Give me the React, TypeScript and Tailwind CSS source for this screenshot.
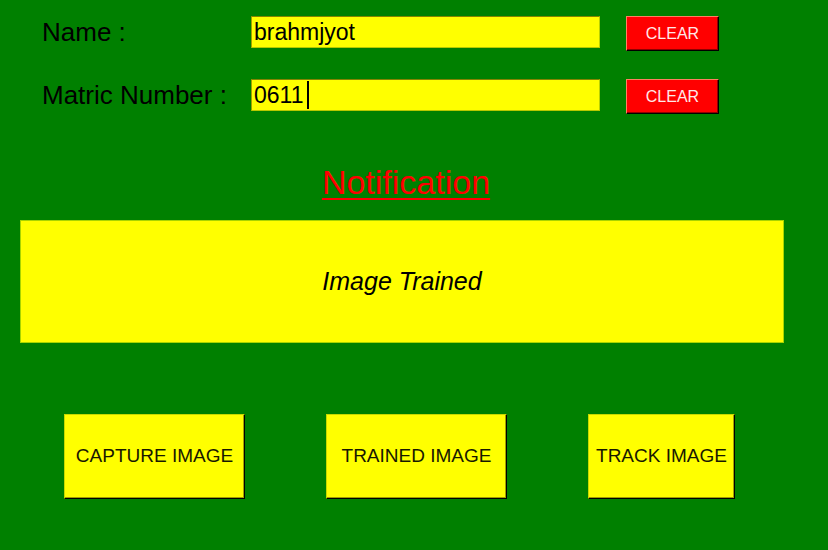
import { useState } from "react";

interface FieldProps {
  id: string;
  label: string;
  value: string;
  onChange: (value: string) => void;
  caret?: boolean;
}

function Field({ id, label, value, onChange, caret }: FieldProps) {
  return (
    <div className="flex items-start">
      <label htmlFor={id} className="w-[209px] shrink-0 whitespace-nowrap text-[26px] leading-8">
        {label}
      </label>
      <div className="relative w-[349px] shrink-0">
        <input
          id={id}
          value={value}
          onChange={(e) => onChange(e.target.value)}
          className="block h-8 w-full border border-t-[#848400] border-r-[#b8d000] border-b-[#b8c800] border-l-[#a0a000] bg-[#ffff00] px-0.5 text-[23px] leading-7 outline-none"
        />
        {caret && <span className="absolute top-0.5 left-14 h-7 w-0.5 bg-black" />}
      </div>
      <button
        type="button"
        aria-label={`CLEAR ${label}`}
        onClick={() => onChange("")}
        className="ml-[26px] h-[35px] w-[93px] shrink-0 border border-t-[#ff8060] border-r-black border-b-black border-l-[#ff8060] bg-[#ff0000] text-base text-[#ffe8e8] shadow-[inset_-1px_-1px_0_#900000]"
      >
        CLEAR
      </button>
    </div>
  );
}

function Action({ label, className }: { label: string; className: string }) {
  return (
    <button
      type="button"
      className={`h-[85px] shrink-0 whitespace-nowrap border border-t-[#c8d800] border-r-black border-b-black border-l-[#c8d800] bg-[#ffff00] text-[19px] text-[#181800] shadow-[inset_-1px_-1px_0_#a0a000] ${className}`}
    >
      {label}
    </button>
  );
}

export default function App() {
  const [name, setName] = useState("brahmjyot");
  const [matric, setMatric] = useState("0611");

  return (
    <main className="min-h-screen bg-[#008000] pt-4 font-['Liberation_Sans',Arial,sans-serif] text-black">
      <form className="flex flex-col gap-7 pl-[42px]">
        <Field id="name" label="Name :" value={name} onChange={setName} />
        <Field id="matric" label="Matric Number :" value={matric} onChange={setMatric} caret />
      </form>
      <section className="mt-12 pl-5">
        <h2 className="pr-9 text-center text-[34px] leading-10 text-[#ff0000] underline decoration-2 underline-offset-4">
          Notification
        </h2>
        <output className="mt-[18px] mr-11 flex h-[123px] items-center justify-center border border-[#a8d400] bg-[#ffff00] text-[25px] italic">
          Image Trained
        </output>
      </section>
      <div className="mt-[71px] flex gap-[81px] pl-16">
        <Action label="CAPTURE IMAGE" className="w-[181px]" />
        <Action label="TRAINED IMAGE" className="w-[181px]" />
        <Action label="TRACK IMAGE" className="w-[147px]" />
      </div>
    </main>
  );
}
